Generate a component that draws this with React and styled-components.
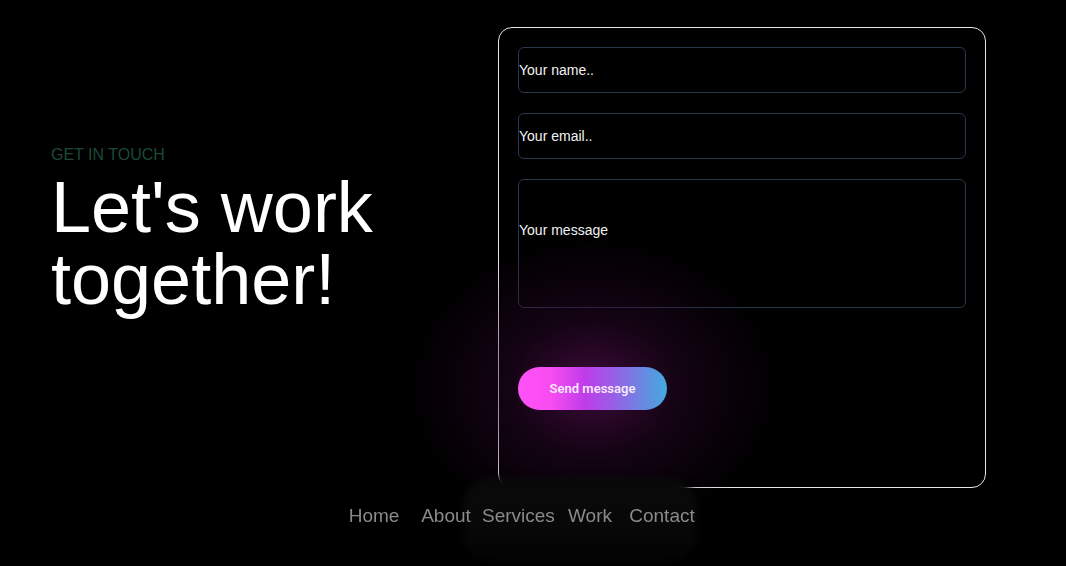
import React from "react";
import styled, { createGlobalStyle } from "styled-components";

const GlobalStyle = createGlobalStyle`
  html, body {
    margin: 0;
    padding: 0;
    background: #000;
    height: 100%;
    overflow: hidden;
  }
  * { box-sizing: border-box; }
`;

const Page = styled.main`
  min-height: 566px;
  background: #000;
  font-family: "Liberation Sans", Arial, sans-serif;
  display: grid;
  grid-template-columns: 447px 488px;
  padding: 27px 80px 0 51px;
`;

const Intro = styled.div`
  padding-top: 119px;
`;

const Eyebrow = styled.p`
  margin: 0;
  font-size: 16px;
  line-height: 18px;
  color: #1d4a37;
  text-transform: uppercase;
`;

const Title = styled.h1`
  margin: 7px 0 0;
  font-size: 72px;
  line-height: 72px;
  font-weight: 400;
  color: #fff;
`;

const Card = styled.form`
  height: 461px;
  border: 1px solid #e6e6e6;
  border-radius: 14px;
  padding: 19px;
  display: flex;
  flex-direction: column;
  gap: 20px;
`;

const fieldBase = `
  width: 448px;
  background: transparent;
  border: 1px solid #29364d;
  border-radius: 6px;
  font-family: "Liberation Sans", Arial, sans-serif;
  font-size: 14px;
  color: #f2f2f2;
  outline: none;
  padding: 0;
  &::placeholder { color: #f2f2f2; opacity: 1; }
`;

const Field = styled.input`
  ${fieldBase}
  height: 46px;
`;

const Message = styled.textarea`
  ${fieldBase}
  height: 129px;
  resize: none;
  padding-top: 42px;
  line-height: 16px;
`;

const ButtonWrap = styled.div`
  position: relative;
  margin-top: 39px;
  width: 149px;
  &::before {
    content: "";
    position: absolute;
    left: -110px;
    top: -130px;
    width: 370px;
    height: 300px;
    background: radial-gradient(
      closest-side,
      rgba(75, 12, 72, 0.8),
      rgba(45, 8, 45, 0.45) 45%,
      rgba(0, 0, 0, 0) 100%
    );
    pointer-events: none;
  }
`;

const SendButton = styled.button`
  position: relative;
  width: 149px;
  height: 43px;
  border: none;
  border-radius: 22px;
  background: linear-gradient(
    90deg,
    #ff52f7 0%,
    #f84cf2 22%,
    #bf3ce9 45%,
    #9a5de6 63%,
    #44a9df 100%
  );
  color: #f6e8fb;
  font-family: Roboto, "Liberation Sans", sans-serif;
  font-weight: 600;
  font-size: 13px;
  cursor: pointer;
`;

const Nav = styled.nav`
  position: fixed;
  left: 0;
  right: 0;
  bottom: 0;
  height: 88px;
  display: flex;
  justify-content: center;
  padding-right: 30px;
`;

const NavList = styled.div`
  position: relative;
  display: flex;
  padding-top: 27px;
  &::before {
    content: "";
    position: absolute;
    left: 125px;
    top: 0;
    width: 234px;
    height: 84px;
    border-radius: 28px;
    background: linear-gradient(180deg, #0a0a0a 0%, #080808 55%, #030303 100%);
    filter: blur(3px);
  }
`;

const NavLink = styled.a`
  position: relative;
  width: 72px;
  text-align: center;
  font-family: "Liberation Sans", Arial, sans-serif;
  font-size: 19px;
  line-height: 22px;
  color: #8a8a8a;
  text-decoration: none;
`;

const links = ["Home", "About", "Services", "Work", "Contact"];

export default function App() {
  return (
    <>
      <GlobalStyle />
      <Page>
        <Intro>
          <Eyebrow>Get in touch</Eyebrow>
          <Title>
            Let's work
            <br />
            together!
          </Title>
        </Intro>
        <Card onSubmit={(e) => e.preventDefault()}>
          <Field placeholder="Your name.." />
          <Field placeholder="Your email.." />
          <Message placeholder="Your message" />
          <ButtonWrap>
            <SendButton type="submit">Send message</SendButton>
          </ButtonWrap>
        </Card>
      </Page>
      <Nav>
        <NavList>
          {links.map((l) => (
            <NavLink key={l} href="#">
              {l}
            </NavLink>
          ))}
        </NavList>
      </Nav>
    </>
  );
}
